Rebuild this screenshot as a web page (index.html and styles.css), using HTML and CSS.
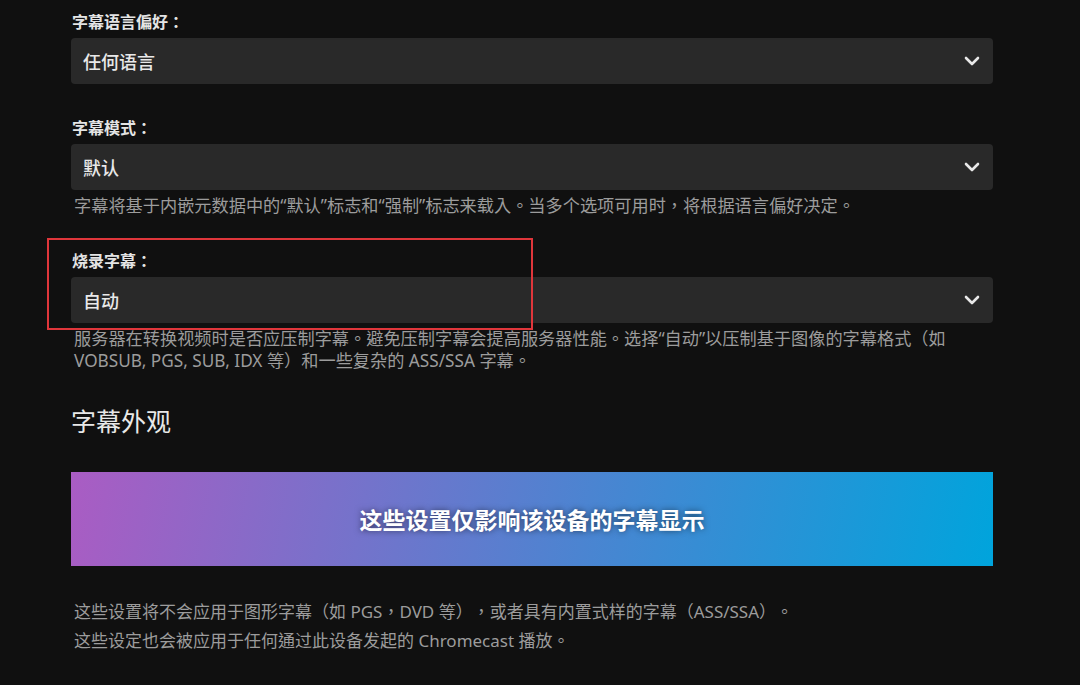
FILE: index.html
```html
<!DOCTYPE html>
<html lang="zh-Hant">
<head>
<meta charset="utf-8">
<title>字幕设置</title>
<link rel="stylesheet" href="styles.css">
</head>
<body>
<main class="page">
  <div class="field">
    <label class="field-label">字幕语言偏好：</label>
    <div class="select">
      <span class="select-value">任何语言</span>
      <svg class="chevron" viewBox="0 0 16 10" width="16" height="10"><polyline points="2,2 8,8 14,2" fill="none" stroke="#e8e8e8" stroke-width="2.6" stroke-linecap="round" stroke-linejoin="round"/></svg>
    </div>
  </div>

  <div class="field">
    <label class="field-label">字幕模式：</label>
    <div class="select">
      <span class="select-value">默认</span>
      <svg class="chevron" viewBox="0 0 16 10" width="16" height="10"><polyline points="2,2 8,8 14,2" fill="none" stroke="#e8e8e8" stroke-width="2.6" stroke-linecap="round" stroke-linejoin="round"/></svg>
    </div>
    <div class="field-desc">字幕将基于内嵌元数据中的“默认”标志和“强制”标志来载入。当多个选项可用时，将根据语言偏好决定。</div>
  </div>

  <div class="field highlighted">
    <label class="field-label">烧录字幕：</label>
    <div class="select">
      <span class="select-value">自动</span>
      <svg class="chevron" viewBox="0 0 16 10" width="16" height="10"><polyline points="2,2 8,8 14,2" fill="none" stroke="#e8e8e8" stroke-width="2.6" stroke-linecap="round" stroke-linejoin="round"/></svg>
    </div>
    <div class="field-desc">服务器在转换视频时是否应压制字幕。避免压制字幕会提高服务器性能。选择“自动”以压制基于图像的字幕格式（如 VOBSUB, PGS, SUB, IDX 等）和一些复杂的 ASS/SSA 字幕。</div>
    <div class="annotation"></div>
  </div>

  <h2 class="section-title">字幕外观</h2>

  <div class="banner">这些设置仅影响该设备的字幕显示</div>

  <div class="notes">
    <p>这些设置将不会应用于图形字幕（如 PGS，DVD 等），或者具有内置式样的字幕（ASS/SSA）。</p>
    <p>这些设定也会被应用于任何通过此设备发起的 Chromecast 播放。</p>
  </div>
</main>
</body>
</html>
```

FILE: styles.css
```css
html, body {
  margin: 0;
  padding: 0;
  background: #101010;
  height: 100%;
  overflow: hidden;
}

body {
  font-family: "Noto Sans", "Noto Sans CJK TC", sans-serif;
  color: #e6e6e6;
  text-spacing-trim: space-all;
}

.page {
  width: 922px;
  padding: 10px 0 0 71px;
}

.field {
  position: relative;
  margin-bottom: 32px;
}

.field-label {
  display: block;
  font-size: 16px;
  line-height: 24px;
  font-weight: 600;
  color: #e4e4e4;
  padding-left: 1px;
}

.select {
  margin-top: 4px;
  height: 46px;
  background: #292929;
  border-radius: 4px;
  display: flex;
  align-items: center;
  justify-content: space-between;
  padding: 0 12px 0 12px;
}

.select-value {
  font-size: 18px;
  font-weight: 500;
  color: #e8e8e8;
}

.chevron {
  display: block;
  margin-right: 1px;
}

.field-desc {
  margin-top: 5px;
  font-size: 17.2px;
  line-height: 22px;
  color: #9c9c9c;
  padding-left: 3px;
}

.annotation {
  position: absolute;
  left: -24px;
  top: -11px;
  width: 482px;
  height: 88px;
  border: 2px solid #e0363b;
  pointer-events: none;
}

.section-title {
  margin: 0 0 36px 0;
  padding-top: 2px;
  font-size: 25px;
  line-height: 30px;
  font-weight: 400;
  color: #e8e8e8;
}

.banner {
  height: 94px;
  display: flex;
  align-items: center;
  justify-content: center;
  background: linear-gradient(100deg, #aa5cc3 0%, #00a4dc 100%);
  font-size: 23px;
  font-weight: 600;
  color: #ffffff;
  text-shadow: 0 0 6px rgba(0, 0, 0, 0.55);
}

.notes {
  margin-top: 31px;
  padding-left: 3px;
}

.notes p {
  margin: 0;
  font-size: 17px;
  line-height: 29px;
  color: #9c9c9c;
}
```
